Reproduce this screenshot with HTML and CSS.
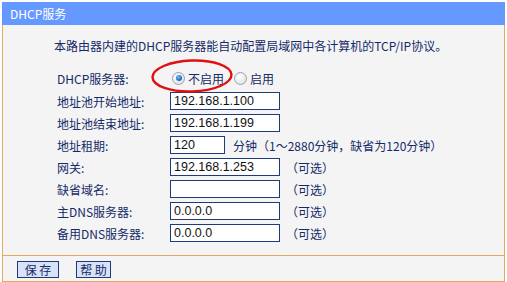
FILE: index.html
```html
<!DOCTYPE html>
<html lang="zh-CN">
<head>
<meta charset="utf-8">
<title>DHCP服务</title>
<link rel="stylesheet" href="styles.css">
</head>
<body>
<div class="panel">
  <div class="title">DHCP服务</div>
  <div class="content">
    <p class="intro">本路由器内建的DHCP服务器能自动配置局域网中各计算机的TCP/IP协议。</p>
    <div class="form">
      <div class="row row-first">
        <span class="label">DHCP服务器:</span>
        <span class="radios">
          <label class="opt"><span class="radio checked"></span>不启用</label>
          <label class="opt"><span class="radio"></span>启用</label>
          <svg class="mark" width="86" height="38" viewBox="0 0 86 38"><ellipse cx="43" cy="19" rx="39.5" ry="15.5" fill="none" stroke="#e01010" stroke-width="2.4" transform="rotate(-2 43 19)"/></svg>
        </span>
      </div>
      <div class="row"><span class="label">地址池开始地址:</span><span class="field">192.168.1.100</span></div>
      <div class="row"><span class="label">地址池结束地址:</span><span class="field">192.168.1.199</span></div>
      <div class="row"><span class="label">地址租期:</span><span class="field short">120</span><span class="unit">分钟</span><span class="note">（1～2880分钟，缺省为120分钟）</span></div>
      <div class="row"><span class="label">网关:</span><span class="field">192.168.1.253</span><span class="opt-note">（可选）</span></div>
      <div class="row"><span class="label">缺省域名:</span><span class="field"></span><span class="opt-note">（可选）</span></div>
      <div class="row"><span class="label">主DNS服务器:</span><span class="field">0.0.0.0</span><span class="opt-note">（可选）</span></div>
      <div class="row"><span class="label">备用DNS服务器:</span><span class="field">0.0.0.0</span><span class="opt-note">（可选）</span></div>
    </div>
  </div>
  <div class="foot">
    <span class="btn btn-save">保 存</span>
    <span class="btn btn-help">帮 助</span>
  </div>
</div>
</body>
</html>
```

FILE: styles.css
```css
html, body {
  margin: 0;
  padding: 0;
  background: #ffffff;
}
body {
  font-family: "Noto Sans CJK SC", "Liberation Sans", sans-serif;
  font-size: 12px;
  color: #152a68;
}
.panel {
  margin: 2px 0 0 2px;
  width: 503px;
}
.title {
  height: 23px;
  line-height: 23px;
  background: #6699ff;
  color: #ffffff;
  padding-left: 8px;
  font-size: 12px;
}
.content {
  height: 229px;
  background: #f4f4f4;
  border-left: 1px solid #e6a763;
  border-right: 1px solid #e6a763;
  border-bottom: 1px solid #e6a763;
  padding-top: 1px;
}
.intro {
  margin: 12px 0 0 51px;
  height: 16px;
  line-height: 16px;
}
.form {
  margin: 12px 0 0 54px;
}
.row {
  display: flex;
  align-items: center;
  height: 22px;
}
.row-first {
  height: 24px;
}
.label {
  width: 113px;
  flex: none;
}
.radios {
  position: relative;
  display: flex;
  align-items: center;
}
.opt {
  display: flex;
  align-items: center;
}
.opt + .opt {
  margin-left: 8px;
}
.radio {
  width: 11px;
  height: 11px;
  border-radius: 50%;
  border: 1px solid #9aa3b0;
  background: radial-gradient(circle at 40% 35%, #ffffff 0%, #e4e6ea 70%, #c9ced6 100%);
  margin: 0 3px 0 2px;
  position: relative;
  box-sizing: content-box;
}
.radio.checked::after {
  content: "";
  position: absolute;
  left: 2.5px;
  top: 2.5px;
  width: 6px;
  height: 6px;
  border-radius: 50%;
  background: radial-gradient(circle at 40% 35%, #7fc0f0 0%, #1a6fc4 60%, #0b3f86 100%);
}
.mark {
  position: absolute;
  left: -21px;
  top: -13px;
  pointer-events: none;
}
.field {
  width: 105px;
  height: 16px;
  border: 1px solid #1f3a7a;
  background: #ffffff;
  font-family: "Liberation Sans", Arial, sans-serif;
  font-size: 12.5px;
  line-height: 16px;
  color: #111111;
  padding-left: 3px;
  box-sizing: content-box;
  flex: none;
}
.field.short {
  width: 50px;
}
.unit {
  margin-left: 8px;
}
.opt-note {
  margin-left: 6px;
}
.foot {
  background: #f4f4f4;
  border-left: 1px solid #e6a763;
  border-right: 1px solid #e6a763;
  border-bottom: 1px solid #e6a763;
  display: flex;
  align-items: flex-start;
  padding: 5px 0 0 14px;
  box-sizing: border-box;
  height: 26px;
}
.btn {
  height: 15px;
  border: 1px solid #1f3a7a;
  background: #d9e2f7;
  color: #152a68;
  font-size: 12px;
  line-height: 15px;
  text-align: center;
  box-sizing: content-box;
}
.btn-save {
  width: 40px;
}
.btn-help {
  width: 33px;
  margin-left: 17px;
}
```
